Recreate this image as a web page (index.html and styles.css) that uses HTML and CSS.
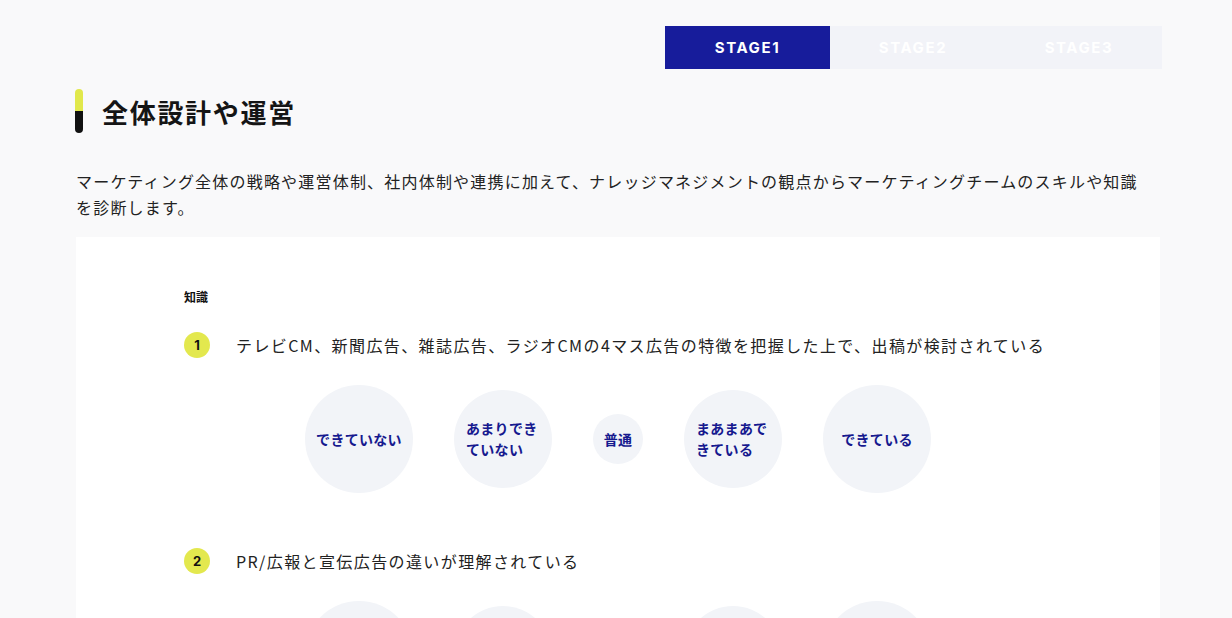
FILE: index.html
```html
<!DOCTYPE html>
<html lang="ja">
<head>
<meta charset="utf-8">
<title>全体設計や運営</title>
<link rel="stylesheet" href="styles.css">
</head>
<body>
<div class="page">
  <nav class="tabs">
    <div class="tab tab-active">STAGE1</div>
    <div class="tab">STAGE2</div>
    <div class="tab">STAGE3</div>
  </nav>
  <h1 class="heading"><span class="heading-bar"></span><span class="heading-text">全体設計や運営</span></h1>
  <p class="lead">マーケティング全体の戦略や運営体制、社内体制や連携に加えて、ナレッジマネジメントの観点からマーケティングチームのスキルや知識を診断します。</p>
  <section class="card">
    <div class="category">知識</div>
    <div class="question">
      <span class="badge">1</span>
      <span class="q-text">テレビCM、新聞広告、雑誌広告、ラジオCMの4マス広告の特徴を把握した上で、出稿が検討されている</span>
    </div>
    <div class="choices">
      <div class="choice c-xl"><span>できていない</span></div>
      <div class="choice c-l"><span>あまりできていない</span></div>
      <div class="choice c-s"><span>普通</span></div>
      <div class="choice c-l"><span>まあまあできている</span></div>
      <div class="choice c-xl"><span>できている</span></div>
    </div>
    <div class="question q-next">
      <span class="badge">2</span>
      <span class="q-text">PR/広報と宣伝広告の違いが理解されている</span>
    </div>
    <div class="choices">
      <div class="choice c-xl"><span>できていない</span></div>
      <div class="choice c-l"><span>あまりできていない</span></div>
      <div class="choice c-s"><span>普通</span></div>
      <div class="choice c-l"><span>まあまあできている</span></div>
      <div class="choice c-xl"><span>できている</span></div>
    </div>
  </section>
</div>
</body>
</html>
```
FILE: styles.css
```css
html, body {
  margin: 0;
  padding: 0;
  background: #f9f9fa;
  font-family: "Noto Sans CJK JP", "Noto Sans", sans-serif;
  color: #1e1e1e;
}
.page {
  width: 1084px;
  margin-left: 76px;
  padding-top: 26px;
}
.tabs {
  display: flex;
  justify-content: flex-end;
  margin-right: -2px;
}
.tab {
  width: 166px;
  height: 43px;
  display: flex;
  align-items: center;
  justify-content: center;
  background: #f2f3f8;
  color: #ffffff;
  font-family: "Inter", "Noto Sans", sans-serif;
  font-weight: 700;
  font-size: 15px;
  letter-spacing: 1.6px;
}
.tab-active {
  background: #171c9b;
  width: 165px;
}
.heading {
  display: flex;
  align-items: center;
  margin: 20px 0 0 -1px;
  height: 44px;
}
.heading-bar {
  width: 8px;
  height: 44px;
  border-radius: 4px;
  background: linear-gradient(#e1e84b 0 50%, #111111 50% 100%);
}
.heading-text {
  margin-left: 19px;
  font-size: 26px;
  font-weight: 700;
  color: #151515;
  letter-spacing: 1.7px;
}
.lead {
  margin: 35px 0 0;
  max-width: 1075px;
  font-size: 16px;
  line-height: 26px;
  letter-spacing: 1.2px;
  color: #222;
}
.card {
  margin-top: 17px;
  background: #ffffff;
  padding: 51px 108px 40px;
  min-height: 330px;
}
.category {
  font-size: 12px;
  font-weight: 700;
  line-height: 18px;
  color: #111;
}
.question {
  display: flex;
  align-items: center;
  margin-top: 26px;
  height: 26px;
}
.q-next {
  margin-top: 55px;
}
.badge {
  width: 26px;
  height: 26px;
  border-radius: 50%;
  background: #e3e84e;
  display: flex;
  align-items: center;
  justify-content: center;
  font-family: "Inter", "Noto Sans", sans-serif;
  font-size: 13px;
  font-weight: 700;
  color: #111;
  flex-shrink: 0;
}
.q-text {
  margin-left: 26px;
  font-size: 16px;
  letter-spacing: 1.4px;
  color: #222;
}
.choices {
  display: flex;
  justify-content: center;
  align-items: center;
  gap: 41px;
  margin-top: 27px;
}
.choice {
  border-radius: 50%;
  background: #f2f4f8;
  color: #16198f;
  font-size: 14px;
  font-weight: 700;
  line-height: 21px;
  letter-spacing: 0.3px;
  display: flex;
  align-items: center;
  justify-content: center;
  box-sizing: border-box;
  flex-shrink: 0;
}
.c-xl {
  width: 108px;
  height: 108px;
}
.c-l {
  width: 98px;
  height: 98px;
  padding: 0 12px;
}
.c-s {
  width: 50px;
  height: 50px;
}
```
